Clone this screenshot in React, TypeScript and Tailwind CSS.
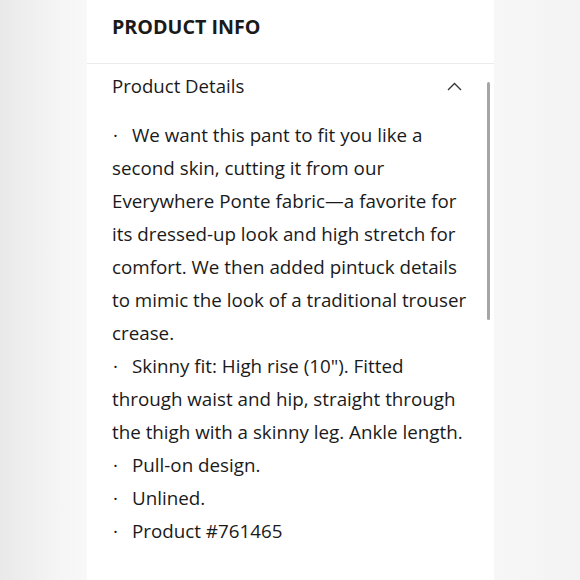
import React from "react";

const items: string[][] = [
  [
    "We want this pant to fit you like a",
    "second skin, cutting it from our",
    "Everywhere Ponte fabric\u2014a favorite for",
    "its dressed-up look and high stretch for",
    "comfort. We then added pintuck details",
    "to mimic the look of a traditional trouser",
    "crease.",
  ],
  [
    "Skinny fit: High rise (10\"). Fitted",
    "through waist and hip, straight through",
    "the thigh with a skinny leg. Ankle length.",
  ],
  ["Pull-on design."],
  ["Unlined."],
  ["Product #761465"],
];

export default function App() {
  return (
    <div
      className="w-[580px] h-[580px] overflow-hidden flex bg-[linear-gradient(90deg,#e9e9e9_0%,#f5f5f5_10%,#f8f8f8_15%,#f7f7f7_85%,#f3f3f3_100%)] text-[#1a1a1a]"
      style={{ fontFamily: "'Open Sans', 'Noto Sans', sans-serif" }}
    >
      <div className="w-[87px] shrink-0" />
      <div className="relative w-[407px] shrink-0 bg-white">
        <div className="h-[64px] border-b border-[#ececec] pl-[25px] pt-[14px]">
          <div className="text-[19.7px] leading-[26px] font-bold">PRODUCT INFO</div>
        </div>
        <div className="flex items-center justify-between pl-[25px] pr-[32px] pt-[10px]">
          <div className="text-[18.6px] leading-[24px] font-medium">Product Details</div>
          <svg width="15" height="9" viewBox="0 0 15 9" className="mt-[1px]">
            <path d="M1 8 L7.5 1.5 L14 8" fill="none" stroke="#333" strokeWidth="1.3" />
          </svg>
        </div>
        <div className="pl-[25px] pt-[21px] text-[18.8px] leading-[33px] font-medium">
          {items.map((lines, i) => (
            <div key={i}>
              {lines.map((l, j) => (
                <div key={j} className="whitespace-nowrap">
                  {j === 0 && <span className="inline-block w-[20px] pl-[1px]">·</span>}
                  {l}
                </div>
              ))}
            </div>
          ))}
        </div>
        <div className="absolute left-[400px] top-[82px] w-[3px] h-[238px] rounded-full bg-[#a6a6a6]" />
      </div>
      <div className="flex-1" />
    </div>
  );
}
